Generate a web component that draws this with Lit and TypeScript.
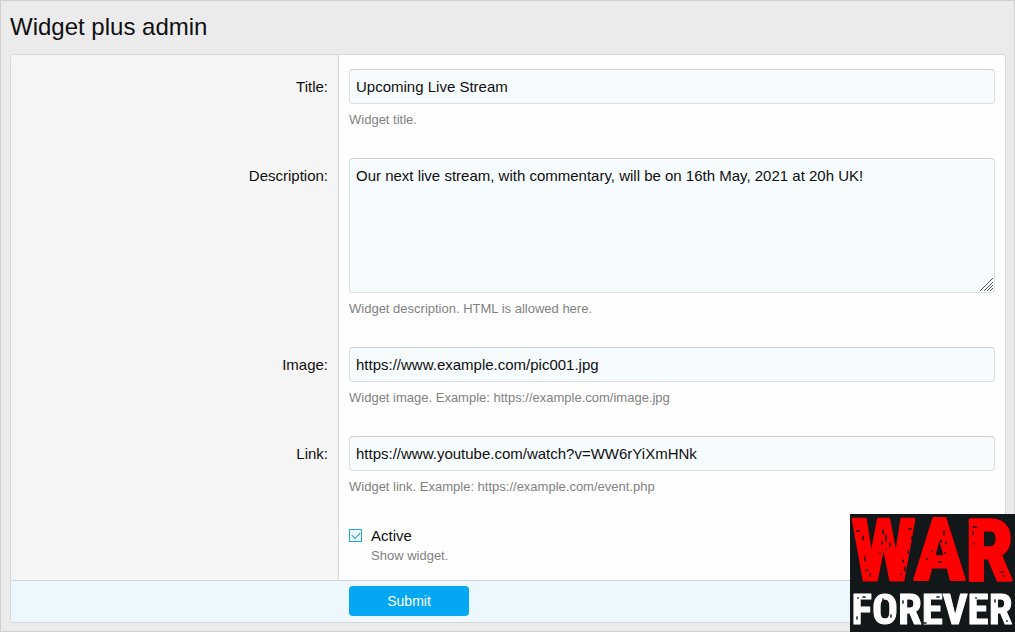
import { LitElement, html, css, svg } from "lit";
import { customElement, state } from "lit/decorators.js";

@customElement("brand-logo")
class BrandLogo extends LitElement {
  static styles = css`
    :host {
      display: block;
    }
    .art {
      display: block;
      width: 165px;
      height: 118px;
      overflow: visible;
    }
    .word {
      font-family: "Roboto Condensed", "Liberation Sans Narrow", "Open Sans Condensed", "DejaVu Sans Condensed", sans-serif;
      font-weight: 700;
      text-anchor: middle;
      stroke-linejoin: round;
    }
    .war {
      font-size: 86px;
      fill: #fe0000;
      stroke: #fe0000;
      stroke-width: 3px;
    }
    .forever {
      font-size: 43px;
      fill: #fff;
      stroke: #fff;
      stroke-width: 1px;
    }
  `;

  // Worn-print specks: x, y, rx, ry
  private specks = [
    [8, 17, 2, 1], [13, 24, 1, 3], [15, 45, 1, 3], [17, 56, 2, 1], [20, 61, 1, 2],
    [33, 18, 1, 3], [32, 29, 1, 2], [36, 24, 1, 4], [40, 31, 1, 3], [30, 39, 1, 1],
    [36, 36, 1, 1], [60, 15, 2, 1], [62, 24, 1, 2], [58, 38, 1, 2], [53, 47, 1, 2],
    [55, 55, 1, 3], [51, 60, 1, 1], [94, 19, 1, 3], [91, 27, 1, 2], [96, 29, 1, 2],
    [90, 48, 2, 1], [82, 37, 1, 1], [95, 39, 1, 1], [77, 45, 1, 1],
    [125, 13, 3, 1], [123, 19, 1, 2], [124, 30, 1, 1], [152, 58, 2, 1], [154, 62, 1, 1],
    [8, 84, 1, 1], [14, 83, 2, 1], [7, 104, 1, 2], [33, 86, 1, 2], [41, 102, 1, 2],
    [53, 88, 1, 2], [75, 109, 2, 1], [88, 83, 2, 1], [103, 85, 1, 1], [113, 103, 1, 2],
    [126, 84, 1, 1], [145, 87, 1, 2], [157, 107, 1, 1],
  ];

  render() {
    return html`<svg class="art" viewBox="0 0 165 118" role="img" aria-label="War Forever">
      <rect width="165" height="118" fill="#12171a" />
      <text class="word war" x="82" y="66">WAR</text>
      <text class="word forever" x="82" y="110">FOREVER</text>
      ${this.specks.map(
        ([x, y, rx, ry]) => svg`<ellipse cx=${x} cy=${y} rx=${rx} ry=${ry} fill="#12171a" opacity="0.8" />`
      )}
    </svg>`;
  }
}

@customElement("app-root")
class AppRoot extends LitElement {
  static styles = css`
    :host {
      display: block;
      box-sizing: border-box;
      min-height: 100vh;
      padding: 10px 8px 8px 9px;
      border: 1px solid #d0d0d0;
      background: #ebebeb;
      color: #101010;
      font: 15px/21px "Liberation Sans", Arial, sans-serif;
    }
    *, *::before {
      box-sizing: border-box;
    }
    .heading {
      margin: 0 0 11px;
      font-size: 24px;
      line-height: 32px;
      font-weight: 400;
    }
    .card {
      border: 1px solid #d8d8d8;
      border-radius: 4px;
      background: #fefefe;
      overflow: hidden;
    }
    .row {
      display: grid;
      grid-template-columns: 33% 1fr;
    }
    .term {
      padding: 21px 10px 0;
      border-right: 1px solid #d8d8d8;
      background: #f5f5f5;
      text-align: right;
    }
    .value {
      padding: 14px 10px;
    }
    .field {
      display: block;
      width: 100%;
      margin: 0;
      padding: 6px;
      border: 1px solid #dce0e3;
      border-top-color: #cfcfcf;
      border-radius: 4px;
      background: #f6fbfe;
      color: #101010;
      font: inherit;
      outline: none;
    }
    .line {
      height: 35px;
    }
    .area {
      height: 135px;
      resize: vertical;
    }
    .area::-webkit-resizer {
      background: url("data:image/svg+xml,%3Csvg xmlns='http://www.w3.org/2000/svg' width='15' height='15' viewBox='0 0 15 15'%3E%3Cpath d='M1 14 14 1M5 14l9-9M8 14l6-6M11 14l3-3' fill='none' stroke='%23555'/%3E%3C/svg%3E") no-repeat right bottom;
    }
    .hint {
      margin: 6px 0 0;
      font-size: 13px;
      line-height: 20px;
      color: #828282;
    }
    .choice {
      display: grid;
      grid-template-columns: 13px 1fr;
      column-gap: 9px;
      align-items: center;
    }
    .tick {
      appearance: none;
      width: 13px;
      height: 13px;
      margin: 0;
      border: 1px solid #1fa3e3;
      background: #eef9ff;
      display: grid;
      place-items: center;
    }
    .tick:checked::before {
      content: "";
      width: 8px;
      height: 5px;
      border: solid #1b93cf;
      border-width: 0 0 1px 1px;
      transform: translateY(-1px) rotate(-45deg);
    }
    .choice .hint {
      grid-column: 2;
      margin: 0;
    }
    .actions {
      display: grid;
      grid-template-columns: 33% 1fr;
      border-top: 1px solid #d0d5d9;
      background: #edf7fe;
      padding: 5px 0 6px;
    }
    .submit {
      grid-column: 2;
      justify-self: start;
      width: 120px;
      height: 30px;
      margin-left: 10px;
      border: 0;
      border-radius: 4px;
      background: #03a7f2;
      color: #fff;
      font: inherit;
      font-size: 14px;
    }
    .brand {
      position: fixed;
      right: 0;
      bottom: 0;
    }
  `;

  @state() private active = true;

  private line(id: string, label: string, value: string, hint: string) {
    return html`<div class="row">
      <div class="term"><label for=${id}>${label}</label></div>
      <div class="value">
        <input class="field line" id=${id} type="text" .value=${value} aria-describedby="${id}-hint" />
        <p class="hint" id="${id}-hint">${hint}</p>
      </div>
    </div>`;
  }

  render() {
    return html`
      <h1 class="heading">Widget plus admin</h1>
      <form class="card" @submit=${(e: Event) => e.preventDefault()}>
        ${this.line("title", "Title:", "Upcoming Live Stream", "Widget title.")}
        <div class="row">
          <div class="term"><label for="description">Description:</label></div>
          <div class="value">
            <textarea class="field area" id="description" aria-describedby="description-hint"
              .value=${"Our next live stream, with commentary, will be on 16th May, 2021 at 20h UK!"}></textarea>
            <p class="hint" id="description-hint">Widget description. HTML is allowed here.</p>
          </div>
        </div>
        ${this.line("image", "Image:", "https://www.example.com/pic001.jpg", "Widget image. Example: https://example.com/image.jpg")}
        ${this.line("link", "Link:", "https://www.youtube.com/watch?v=WW6rYiXmHNk", "Widget link. Example: https://example.com/event.php")}
        <div class="row">
          <div class="term"></div>
          <div class="value">
            <div class="choice">
              <input class="tick" id="active" type="checkbox" aria-describedby="active-hint" .checked=${this.active}
                @change=${(e: Event) => (this.active = (e.target as HTMLInputElement).checked)} />
              <label for="active">Active</label>
              <p class="hint" id="active-hint">Show widget.</p>
            </div>
          </div>
        </div>
        <div class="actions"><button class="submit" type="submit">Submit</button></div>
      </form>
      <brand-logo class="brand"></brand-logo>
    `;
  }
}
